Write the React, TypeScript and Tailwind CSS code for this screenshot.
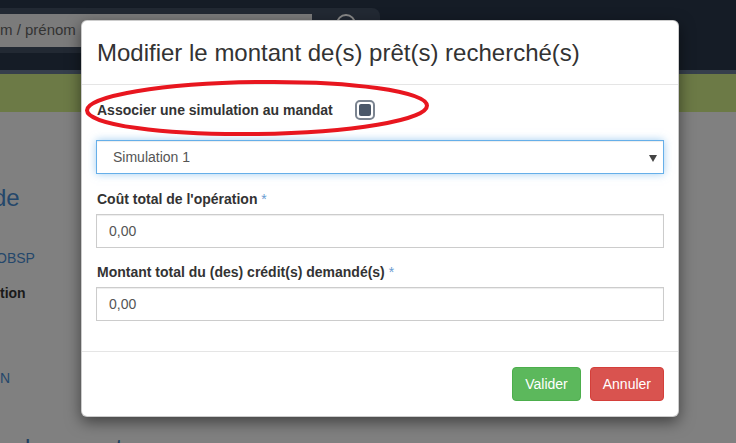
export default function App() {
  return (
    <div className="relative w-[736px] h-[443px] overflow-hidden bg-[#808080] font-['Liberation_Sans',Arial,sans-serif]">
      {/* dimmed page background */}
      <div className="h-[70px] bg-[#151c26] pt-[8px]">
        <div className="flex h-[45px] w-[380px] items-center rounded-r-[8px] bg-[#222933]">
          <div className="flex h-[33px] w-[312px] items-center bg-[#7b7b7b] text-[15px] text-[#333]">m / prénom</div>
          <div className="ml-[24px] h-[20px] w-[20px] self-start mt-[6px] rounded-full border-2 border-[#8a8a8a]" />
        </div>
      </div>
      <div className="h-[4px] bg-[#363f4c]" />
      <div className="h-[38px] bg-[#6c7a46]" />
      <div className="flex flex-col items-start">
        <div className="mt-[72px] -ml-[7px] text-[24px] leading-[28px] text-[#24476b]">de</div>
        <div className="mt-[36px] -ml-[4px] text-[14px] leading-[20px] text-[#24476b]">OBSP</div>
        <div className="mt-[15px] text-[14px] font-bold leading-[20px] text-[#1a1a1a]">tion</div>
        <div className="mt-[65px] text-[14px] leading-[20px] text-[#24476b]">N</div>
        <div className="mt-[46px] -ml-[3px] text-[24px] leading-[28px] text-[#1f3f5f]">e documents</div>
      </div>

      {/* modal */}
      <div className="absolute left-[81px] top-[20px] flex h-[397px] w-[598px] flex-col rounded-[6px] border border-black/20 bg-white shadow-[0_5px_15px_rgba(0,0,0,0.5)]">
        <div className="flex h-[64px] shrink-0 items-center border-b border-[#e5e5e5] px-[15px]">
          <h4 className="text-[24px] leading-[28px] text-[#333]">Modifier le montant de(s) prêt(s) recherché(s)</h4>
        </div>
        <div className="flex flex-col px-[14px] pt-[12px] pb-[30px]">
          <div className="flex h-[26px] items-center">
            <span className="ml-[1px] text-[14px] font-bold text-[#333]">Associer une simulation au mandat</span>
            <div className="ml-[22px] flex h-[20px] w-[20px] items-center justify-center rounded-[5px] border-2 border-[#7b8490] bg-white">
              <div className="h-[12px] w-[12px] rounded-[2px] bg-[#4b5869]" />
            </div>
          </div>
          <div className="relative mt-[17px] flex h-[34px] items-center border border-[#66afe9] pl-[16px] text-[14px] text-[#555] shadow-[inset_0_1px_1px_rgba(0,0,0,0.075),0_0_8px_rgba(102,175,233,0.6)]">
            Simulation 1
            <svg className="absolute right-[6px] top-[14px]" width="8" height="7" viewBox="0 0 8 7">
              <path d="M0 0 H8 L4 7 Z" fill="#444" />
            </svg>
          </div>
          <label className="ml-[1px] mt-[15px] mb-[5px] text-[14px] font-bold leading-[20px] text-[#333]">
            Coût total de l'opération <span className="font-normal text-[#6a9bd1]">*</span>
          </label>
          <div className="flex h-[34px] items-center border border-[#ccc] px-[12px] text-[14px] text-[#555] shadow-[inset_0_1px_1px_rgba(0,0,0,0.075)]">0,00</div>
          <label className="ml-[1px] mt-[14px] mb-[5px] text-[14px] font-bold leading-[20px] text-[#333]">
            Montant total du (des) crédit(s) demandé(s) <span className="font-normal text-[#6a9bd1]">*</span>
          </label>
          <div className="flex h-[34px] items-center border border-[#ccc] px-[12px] text-[14px] text-[#555] shadow-[inset_0_1px_1px_rgba(0,0,0,0.075)]">0,00</div>
        </div>
        <div className="flex justify-end gap-[9px] border-t border-[#e5e5e5] px-[14px] pt-[15px]">
          <button className="h-[34px] rounded-[4px] border border-[#4cae4c] bg-[#5cb85c] px-[12px] text-[14px] text-white">Valider</button>
          <button className="h-[34px] rounded-[4px] border border-[#d43f3a] bg-[#d9534f] px-[12px] text-[14px] text-white">Annuler</button>
        </div>
      </div>

      {/* red annotation ellipse */}
      <svg className="pointer-events-none absolute left-0 top-0" width="736" height="443" viewBox="0 0 736 443">
        <ellipse cx="257" cy="108" rx="170" ry="26" fill="none" stroke="#e8161f" strokeWidth="4" transform="rotate(-0.8 257 108)" />
      </svg>
    </div>
  );
}
